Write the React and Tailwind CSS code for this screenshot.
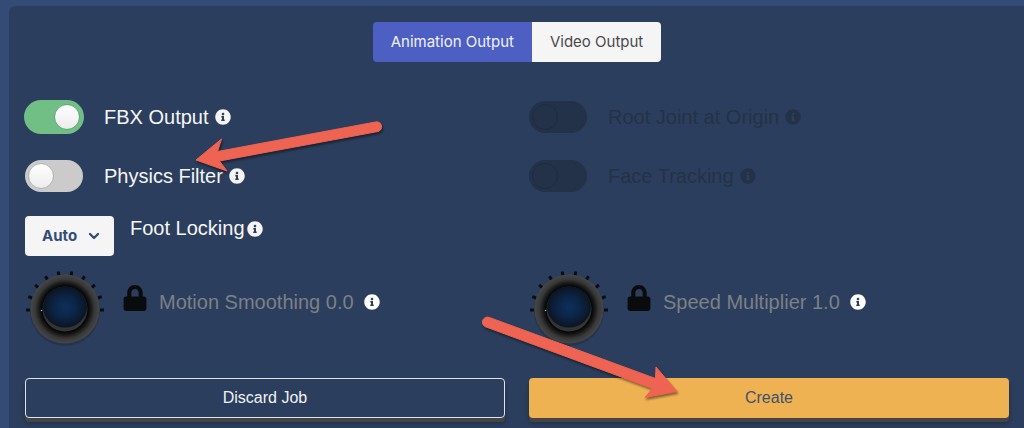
import { useState } from 'react'
import { ChevronDown } from 'lucide-react'
import { FaInfoCircle, FaLock } from 'react-icons/fa'

const TICKS = [0, 20, 40, 60, 80, 100, 120, 140, 160, 180]

function Info({ className = '' }) {
  return <FaInfoCircle size={16} className={`shrink-0 ${className}`} aria-hidden="true" />
}

function Toggle({ id, label, disabled = false, defaultChecked = false }) {
  const [on, setOn] = useState(defaultChecked)

  let track = 'bg-[#cbcbcb]'
  let thumb = 'before:left-[3px] before:bg-linear-to-b before:from-white before:to-[#ececec] before:border-[#b4b4b4]'
  if (disabled) {
    track = 'bg-[#233249]'
    thumb = 'before:left-[3px] before:border-[#1e2b40]'
  } else if (on) {
    track = 'bg-[#72bf86] ring-1 ring-[#72bf86]'
    thumb = 'before:right-[3px] before:bg-linear-to-b before:from-white before:to-[#ececec] before:border-[#5fa874]'
  }

  return (
    <div className={`flex h-9 items-center ${disabled ? 'text-[#233249]' : 'text-[#f5f5f5]'}`}>
      <input
        id={id}
        type="checkbox"
        role="switch"
        checked={on}
        disabled={disabled}
        onChange={e => setOn(e.target.checked)}
        className={`relative h-8 w-[58px] shrink-0 appearance-none rounded-full before:absolute before:top-[3px] before:h-[26px] before:w-[26px] before:rounded-full before:border before:content-[''] ${track} ${thumb}`}
      />
      <label htmlFor={id} className="ml-[21px] text-xl leading-6">{label}</label>
      <Info className="ml-1.5" />
    </div>
  )
}

function Knob({ id, label, value, min, max }) {
  return (
    <div className="flex items-start">
      <div className="relative h-20 w-20 shrink-0">
        <svg viewBox="0 0 80 80" className="h-20 w-20 overflow-visible" aria-hidden="true">
          <defs>
            <radialGradient id={`${id}-rim`}>
              <stop offset="0.66" stopColor="#050505" />
              <stop offset="0.74" stopColor="#161616" />
              <stop offset="0.86" stopColor="#383838" />
              <stop offset="1" stopColor="#474747" />
            </radialGradient>
            <radialGradient id={`${id}-cap`}>
              <stop offset="0" stopColor="#0e2f5c" />
              <stop offset="0.5" stopColor="#0c2547" />
              <stop offset="1" stopColor="#0b1522" />
            </radialGradient>
          </defs>
          {TICKS.map(deg => (
            <line
              key={deg}
              x1="1"
              x2="5"
              y1="41"
              y2="41"
              stroke="#0a0d12"
              strokeWidth="3"
              transform={`rotate(${deg} 40 41)`}
            />
          ))}
          <circle cx="40" cy="42" r="35" fill="#1b2538" opacity="0.4" />
          <circle cx="40" cy="40" r="34.5" fill={`url(#${id}-rim)`} />
          <circle cx="40" cy="40" r="22.5" fill="#343434" />
          <ellipse cx="40" cy="38" rx="22" ry="20.5" fill={`url(#${id}-cap)`} />
          <circle cx="16.5" cy="41.5" r="0.8" fill="#8fb8b0" />
        </svg>
        <input
          id={id}
          type="range"
          min={min}
          max={max}
          step="0.1"
          defaultValue={value}
          disabled
          className="absolute inset-0 h-20 w-20 opacity-0"
        />
      </div>
      <div className="flex h-[66px] items-center">
        <FaLock size={26} className="mb-2 ml-[17px] text-[#090b0d]" aria-hidden="true" />
        <label htmlFor={id} className="ml-[11px] text-xl leading-6 text-[#7d8085]">
          {label} {value}
        </label>
        <Info className="ml-2.5 text-white" />
      </div>
    </div>
  )
}

function Arrows() {
  return (
    <svg
      className="pointer-events-none absolute top-0 left-0 h-[428px] w-[1024px] drop-shadow-[1px_2px_1px_rgba(0,0,0,0.45)]"
      viewBox="0 0 1024 428"
      fill="#ee6352"
      stroke="#ee6352"
      aria-hidden="true"
    >
      <path d="M196 160 L221.500 139 L217.500 151.500 L375.500 122 A4.800 4.800 0 0 1 378 131.500 L219.500 161 L227 171 Z" />
      <path d="M677 391.500 L656 367 L655.500 378.500 L489.500 317.500 A5 5 0 0 0 485.500 326.800 L652.500 388.500 L645 397.500 Z" />
    </svg>
  )
}

export default function App() {
  const [tab, setTab] = useState('animation')

  const tabClass = name =>
    `h-10 px-[18px] text-[15px] ${tab === name ? 'bg-[#4d5fc3] text-[#f0f1fa]' : 'bg-[#f5f5f5] text-[#4a4a4a]'}`

  return (
    <div className="relative flex min-h-screen flex-col overflow-hidden bg-[#344c75] pt-1.5 pl-[9px] font-['Liberation_Sans',Arial,sans-serif]">
      <main className="flex-1 rounded-tl-md bg-[#2b3e5d] pt-4 pr-[15px] pb-2 pl-4">
        <div className="flex justify-center font-[Inter,sans-serif]">
          <div className="flex overflow-hidden rounded">
            <button type="button" className={tabClass('animation')} onClick={() => setTab('animation')}>
              Animation Output
            </button>
            <button type="button" className={tabClass('video')} onClick={() => setTab('video')}>
              Video Output
            </button>
          </div>
        </div>

        <div className="mt-[37px] grid grid-cols-2 gap-x-6 gap-y-[23px]">
          <Toggle id="fbx" label="FBX Output" defaultChecked />
          <Toggle id="root-joint" label="Root Joint at Origin" disabled />
          <Toggle id="physics" label="Physics Filter" />
          <Toggle id="face" label="Face Tracking" disabled />
        </div>

        <div className="mt-[22px] flex items-start text-[#f5f5f5]">
          <div className="relative">
            <select
              id="foot-locking"
              defaultValue="Auto"
              className="h-10 w-[89px] appearance-none rounded bg-[#f5f5f5] pl-[17px] font-[Inter,sans-serif] text-[15px] font-bold text-[#344c75]"
            >
              <option>Auto</option>
              <option>Always</option>
              <option>Never</option>
            </select>
            <ChevronDown
              size={16}
              strokeWidth={3.5}
              className="pointer-events-none absolute top-3 right-3 text-[#344c75]"
              aria-hidden="true"
            />
          </div>
          <label htmlFor="foot-locking" className="ml-4 text-xl leading-6">Foot Locking</label>
          <Info className="mt-[5px] ml-0.5" />
        </div>

        <div className="mt-[13px] grid grid-cols-2 gap-x-6">
          <Knob id="smoothing" label="Motion Smoothing" value="0.0" min="0" max="1" />
          <Knob id="speed" label="Speed Multiplier" value="1.0" min="1" max="8" />
        </div>

        <div className="mt-[29px] grid grid-cols-2 gap-x-6">
          <button
            type="button"
            className="h-10 rounded border border-[#dfe3ea] text-base text-[#f0f2f5] shadow-[0_4px_0_#444444,0_5px_4px_rgba(0,0,0,0.3)]"
          >
            Discard Job
          </button>
          <button
            type="button"
            className="h-10 rounded bg-[#efb253] text-base text-[#3f4f6e] shadow-[0_4px_0_#444444,0_5px_4px_rgba(0,0,0,0.3)]"
          >
            Create
          </button>
        </div>
      </main>
      <Arrows />
    </div>
  )
}
